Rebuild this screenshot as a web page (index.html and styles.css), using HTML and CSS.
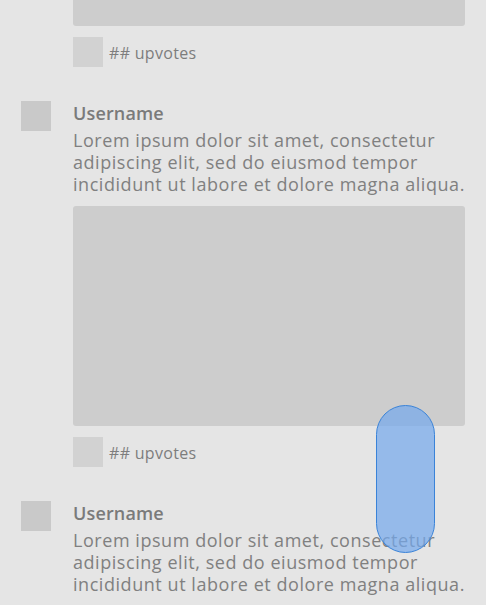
FILE: index.html
```html
<!DOCTYPE html>
<html>
<head>
<meta charset="utf-8">
<link rel="stylesheet" href="styles.css">
</head>
<body>
<div class="feed">
  <div class="post post-partial">
    <div class="spacer"></div>
    <div class="content">
      <div class="media media-partial"></div>
      <div class="votes"><div class="vote-box"></div><span class="vote-text">## upvotes</span></div>
    </div>
  </div>
  <div class="post">
    <div class="avatar"></div>
    <div class="content">
      <div class="username">Username</div>
      <p class="body">Lorem ipsum dolor sit amet, consectetur adipiscing elit, sed do eiusmod tempor incididunt ut labore et dolore magna aliqua.</p>
      <div class="media"></div>
      <div class="votes"><div class="vote-box"></div><span class="vote-text">## upvotes</span></div>
    </div>
  </div>
  <div class="post">
    <div class="avatar"></div>
    <div class="content">
      <div class="username">Username</div>
      <p class="body">Lorem ipsum dolor sit amet, consectetur adipiscing elit, sed do eiusmod tempor incididunt ut labore et dolore magna aliqua.</p>
    </div>
  </div>
</div>
<div class="scroll-thumb"></div>
</body>
</html>
```
FILE: styles.css
```css
html, body {
  margin: 0;
  padding: 0;
  background: #e5e5e5;
  height: 100%;
  overflow: hidden;
}
body {
  font-family: "Open Sans", "Liberation Sans", sans-serif;
  color: #7d7d7d;
  position: relative;
}
.feed {
  display: flex;
  flex-direction: column;
  gap: 34px;
  padding: 0 21px;
}
.post {
  display: grid;
  grid-template-columns: 30px 1fr;
  column-gap: 22px;
  align-items: start;
}
.avatar {
  width: 30px;
  height: 30px;
  background: #c9c9c9;
}
.content {
  display: flex;
  flex-direction: column;
}
.username {
  font-size: 18px;
  font-weight: 600;
  line-height: 22px;
  letter-spacing: 0.15px;
  margin-top: 1px;
  color: #7a7a7a;
}
.body {
  margin: 5px 0 0;
  font-size: 18px;
  line-height: 22px;
  letter-spacing: 0.55px;
  color: #808080;
}
.media {
  margin-top: 11px;
  height: 220px;
  background: #cdcdcd;
  border-radius: 3px;
}
.media-partial {
  margin-top: 0;
  height: 26px;
  border-radius: 0 0 3px 3px;
}
.votes {
  margin-top: 11px;
  display: flex;
  align-items: center;
  gap: 6px;
  height: 30px;
}
.vote-box {
  width: 30px;
  height: 30px;
  background: #d2d2d2;
}
.vote-text {
  font-size: 16px;
  letter-spacing: 0.3px;
  color: #7d7d7d;
  margin-top: 2px;
}
.scroll-thumb {
  position: absolute;
  left: 376px;
  top: 405px;
  width: 57px;
  height: 146px;
  border-radius: 30px;
  background: rgba(115, 168, 236, 0.7);
  border: 1.5px solid #3a83d8;
}
```
